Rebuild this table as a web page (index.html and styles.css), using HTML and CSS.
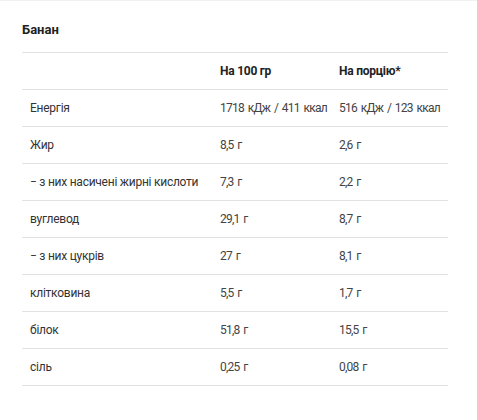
FILE: index.html
```html
<!DOCTYPE html>
<html lang="uk">
<head>
<meta charset="utf-8">
<link rel="stylesheet" href="styles.css">
</head>
<body>
<div class="panel">
  <h2 class="title">Банан</h2>
  <table class="nutri">
    <thead>
      <tr><th></th><th>На 100 гр</th><th>На порцію*</th></tr>
    </thead>
    <tbody>
      <tr><td>Енергія</td><td>1718 кДж / 411 ккал</td><td>516 кДж / 123 ккал</td></tr>
      <tr><td>Жир</td><td>8,5 г</td><td>2,6 г</td></tr>
      <tr><td>− з них насичені жирні кислоти</td><td>7,3 г</td><td>2,2 г</td></tr>
      <tr><td>вуглевод</td><td>29,1 г</td><td>8,7 г</td></tr>
      <tr><td>− з них цукрів</td><td>27 г</td><td>8,1 г</td></tr>
      <tr><td>клітковина</td><td>5,5 г</td><td>1,7 г</td></tr>
      <tr><td>білок</td><td>51,8 г</td><td>15,5 г</td></tr>
      <tr><td>сіль</td><td>0,25 г</td><td>0,08 г</td></tr>
    </tbody>
  </table>
</div>
</body>
</html>
```
FILE: styles.css
```css
html, body {
  margin: 0;
  padding: 0;
  background: #fff;
}
body {
  font-family: Roboto, "Noto Sans", sans-serif;
  color: #333;
  border-top: 1px solid #f0f0f0;
}
.panel {
  padding: 0 29px 0 22px;
}
.title {
  margin: 0;
  font-size: 13px;
  font-weight: 700;
  color: #222;
  box-sizing: border-box;
  height: 52px;
  border-bottom: 1px solid #e2e2e2;
  line-height: 58px;
}
.nutri {
  width: 426px;
  border-collapse: collapse;
  table-layout: fixed;
  font-size: 12px;
  letter-spacing: -0.25px;
}
.nutri th, .nutri td {
  height: 36px;
  padding: 0 0 0 8px;
  border-bottom: 1px solid #e2e2e2;
  text-align: left;
  vertical-align: middle;
  white-space: nowrap;
}
.nutri th {
  font-weight: 700;
  color: #222;
}
.nutri th:nth-child(1) { width: 182px; }
.nutri th:nth-child(2) { width: 111px; }
.nutri td:not(:first-child) {
  color: #444;
  letter-spacing: -0.75px;
  word-spacing: 1.5px;
}
```
